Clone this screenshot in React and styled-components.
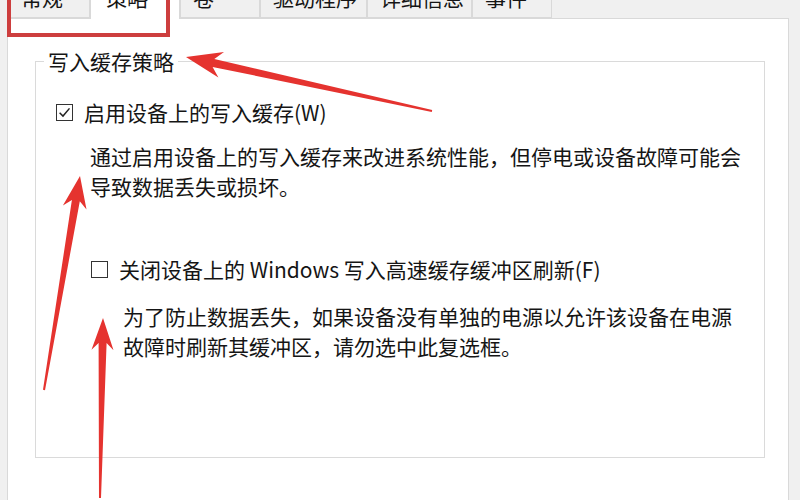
import React from "react";
import styled, { createGlobalStyle } from "styled-components";

const GlobalStyle = createGlobalStyle`
  html, body {
    margin: 0;
    padding: 0;
    background: #f0f0f0;
    overflow: hidden;
  }
  body {
    font-family: "Noto Sans CJK SC", "Noto Sans", sans-serif;
    color: #151515;
  }
`;

const Window = styled.div`
  position: relative;
  width: 800px;
  height: 500px;
  overflow: hidden;
  background: #f0f0f0;
`;

const TabStrip = styled.div`
  display: flex;
  align-items: flex-end;
  height: 34px;
  margin-top: -16px;
  padding-left: 8px;
  position: relative;
  z-index: 2;
`;

const Tab = styled.div`
  box-sizing: border-box;
  width: ${(p) => p.$w}px;
  height: ${(p) => (p.$active ? 37 : 34)}px;
  margin-bottom: ${(p) => (p.$active ? -1 : 0)}px;
  padding-left: ${(p) => (p.$active ? 15 : 12)}px;
  padding-top: ${(p) => (p.$active ? 2 : 0)}px;
  background: ${(p) => (p.$active ? "#ffffff" : "#f0f0f0")};
  border: 1px solid #d9d9d9;
  border-bottom: ${(p) => (p.$active ? "none" : "1px solid #d9d9d9")};
  font-size: 21px;
  line-height: 24px;
  color: #151515;
  white-space: nowrap;
`;

const Page = styled.div`
  box-sizing: border-box;
  margin-left: 7px;
  width: 782px;
  height: 500px;
  background: #ffffff;
  border: 1px solid #d9d9d9;
  padding: 28px 0 0 27px;
`;

const GroupBox = styled.fieldset`
  box-sizing: border-box;
  margin: 0;
  width: 730px;
  height: 411px;
  padding: 0;
  border: 1px solid #dadada;
`;

const Legend = styled.legend`
  margin-left: 8px;
  padding: 0 4px;
  font-size: 21px;
  line-height: 28px;
`;

const CheckRow = styled.div`
  display: flex;
  align-items: center;
  gap: 11px;
  margin-top: ${(p) => p.$top}px;
  padding-left: ${(p) => p.$indent}px;
  font-size: 21px;
  line-height: 30px;
  white-space: nowrap;
`;

const Box = styled.span`
  box-sizing: border-box;
  display: flex;
  align-items: center;
  justify-content: center;
  width: 17px;
  height: 17px;
  border: 1.6px solid #333333;
  background: #ffffff;
  flex: none;
`;

const Description = styled.p`
  margin: ${(p) => p.$top}px 0 0 ${(p) => p.$indent}px;
  font-size: 21px;
  line-height: 30px;
  white-space: nowrap;
`;

const Frame = styled.div`
  position: absolute;
  left: 7px;
  top: -10px;
  width: 163px;
  height: 47px;
  box-sizing: border-box;
  border: 4px solid #cd3e3e;
  z-index: 3;
`;

const Overlay = styled.svg`
  position: absolute;
  left: 0;
  top: 0;
  width: 800px;
  height: 500px;
  pointer-events: none;
  z-index: 4;
`;

const tabs = [
  { label: "常规", w: 82 },
  { label: "策略", w: 90, active: true },
  { label: "卷", w: 80 },
  { label: "驱动程序", w: 107 },
  { label: "详细信息", w: 105 },
  { label: "事件", w: 80 },
];

// tapered annotation arrow from tail to tip
function arrowPoints(tail, tip, tailW, neckW, headW, headL) {
  const dx = tip[0] - tail[0];
  const dy = tip[1] - tail[1];
  const len = Math.hypot(dx, dy);
  const ux = dx / len;
  const uy = dy / len;
  const nx = -uy;
  const ny = ux;
  const at = (d, s) => [tip[0] - ux * d + nx * s, tip[1] - uy * d + ny * s];
  const pts = [
    [tail[0] + (nx * tailW) / 2, tail[1] + (ny * tailW) / 2],
    at(headL * 0.78, neckW / 2),
    at(headL, headW / 2),
    tip,
    at(headL, -headW / 2),
    at(headL * 0.78, -neckW / 2),
    [tail[0] - (nx * tailW) / 2, tail[1] - (ny * tailW) / 2],
  ];
  return pts.map((p) => `${p[0].toFixed(1)},${p[1].toFixed(1)}`).join(" ");
}

const arrows = [
  { tail: [432, 111], tip: [186, 57], tw: 2, nw: 8, hw: 26, hl: 36 },
  { tail: [44, 390], tip: [80, 176], tw: 2, nw: 8, hw: 24, hl: 32 },
  { tail: [100, 498], tip: [103, 318], tw: 2, nw: 8, hw: 22, hl: 32 },
];

const CheckBox = ({ checked }) => (
  <Box>
    {checked && (
      <svg width="13" height="13" viewBox="0 0 12 12">
        <path d="M1.5 6.2 L4.6 9.3 L10.6 2.2" fill="none" stroke="#222" strokeWidth="1.4" />
      </svg>
    )}
  </Box>
);

export default function App() {
  return (
    <>
      <GlobalStyle />
      <Window>
        <TabStrip>
          {tabs.map((t) => (
            <Tab key={t.label} $w={t.w} $active={t.active}>
              {t.label}
            </Tab>
          ))}
        </TabStrip>
        <Page>
          <GroupBox>
            <Legend>写入缓存策略</Legend>
            <CheckRow $top={22} $indent={20}>
              <CheckBox checked />
              <span>启用设备上的写入缓存(W)</span>
            </CheckRow>
            <Description $top={14} $indent={54}>
              通过启用设备上的写入缓存来改进系统性能，但停电或设备故障可能会
              <br />
              导致数据丢失或损坏。
            </Description>
            <CheckRow $top={53} $indent={55}>
              <CheckBox />
              <span>关闭设备上的 Windows 写入高速缓存缓冲区刷新(F)</span>
            </CheckRow>
            <Description $top={17} $indent={87}>
              为了防止数据丢失，如果设备没有单独的电源以允许该设备在电源
              <br />
              故障时刷新其缓冲区，请勿选中此复选框。
            </Description>
          </GroupBox>
        </Page>
        <Frame />
        <Overlay viewBox="0 0 800 500">
          {arrows.map((a, i) => (
            <polygon key={i} points={arrowPoints(a.tail, a.tip, a.tw, a.nw, a.hw, a.hl)} fill="#e5332f" />
          ))}
        </Overlay>
      </Window>
    </>
  );
}
